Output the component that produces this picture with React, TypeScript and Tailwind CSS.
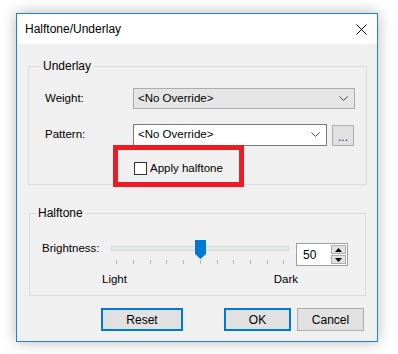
import React from 'react';

const font = { fontFamily: '"Liberation Sans", Arial, sans-serif' };

function Chevron() {
  return (
    <svg width="9" height="6" viewBox="0 0 9 6" className="shrink-0">
      <path d="M0.5 0.5 L4.5 4.5 L8.5 0.5" fill="none" stroke="#444" strokeWidth="1" />
    </svg>
  );
}

function Slider() {
  const ticks = [5, 22, 39, 55, 72, 89, 106, 122, 139, 156, 172];
  return (
    <svg width="178" height="24" viewBox="0 0 178 24" className="shrink-0">
      {/* track */}
      <rect x="0.5" y="6.5" width="177" height="4" fill="#e7eaea" stroke="#d6d6d6" />
      {/* ticks */}
      {ticks.map((x) => (
        <line key={x} x1={x + 0.5} y1="20" x2={x + 0.5} y2="24" stroke="#b4b4b4" />
      ))}
      {/* thumb */}
      <path d="M84 0 H95 V14 L89.5 19 L84 14 Z" fill="#0078d7" />
    </svg>
  );
}

function SpinBox() {
  return (
    <div className="mt-[3px] flex h-[23px] w-[52px] border border-[#a0a0a0] bg-white">
      <div className="flex w-[34px] items-center pl-[6px] text-[12px] text-black">50</div>
      <div className="flex flex-col gap-[1px] py-[1px] pr-[1px]">
        <div className="flex h-[9px] w-[15px] items-center justify-center border border-[#adadad] bg-[#e1e1e1]">
          <svg width="7" height="4" viewBox="0 0 7 4">
            <path d="M0 4 L3.5 0 L7 4 Z" fill="#000" />
          </svg>
        </div>
        <div className="flex h-[9px] w-[15px] items-center justify-center border border-[#adadad] bg-[#e1e1e1]">
          <svg width="7" height="4" viewBox="0 0 7 4">
            <path d="M0 0 L3.5 4 L7 0 Z" fill="#000" />
          </svg>
        </div>
      </div>
    </div>
  );
}

function Button({ label, width, primary }: { label: string; width: string; primary?: boolean }) {
  return (
    <button
      className={`flex h-[23px] items-center justify-center bg-[#e1e1e1] text-[12px] text-black ${width} ${
        primary ? 'border-2 border-[#0078d7]' : 'border border-[#adadad]'
      }`}
    >
      {label}
    </button>
  );
}

export default function App() {
  return (
    <div className="relative h-[354px] w-[398px] overflow-hidden bg-white pl-[16px] pt-[13px]" style={font}>
      <div className="flex h-[329px] w-[362px] flex-col border border-[#1883d7] bg-[#f0f0f0] shadow-[0_0_14px_rgba(0,0,0,0.28)]">
        {/* Title bar */}
        <div className="flex h-[30px] shrink-0 items-center justify-between bg-white pl-[8px] pr-[10px]">
          <span className="text-[12px] text-black">Halftone/Underlay</span>
          <svg width="11" height="11" viewBox="0 0 11 11">
            <path d="M0.5 0.5 L10.5 10.5 M10.5 0.5 L0.5 10.5" stroke="#000" strokeWidth="1" />
          </svg>
        </div>

        {/* Underlay group */}
        <fieldset className="ml-[11px] mt-[14px] w-[339px] border border-[#dcdcdc] p-0">
          <legend className="ml-[11px] px-[3px] text-[12px] leading-[16px] text-black">Underlay</legend>
          <div className="flex flex-col pb-[9px] pl-[16px] pr-[11px] pt-[14px] text-[11.5px]">
            <div className="flex h-[21px] items-center">
              <span className="w-[88px] text-black">Weight:</span>
              <div className="flex h-[21px] flex-1 items-center justify-between border border-[#acacac] bg-[#e5e5e5] pl-[4px] pr-[6px] text-black">
                <span>&lt;No Override&gt;</span>
                <Chevron />
              </div>
            </div>
            <div className="mt-[15px] flex h-[22px] items-center">
              <span className="w-[88px] text-black">Pattern:</span>
              <div className="flex h-[22px] w-[194px] items-center justify-between border border-[#7a7a7a] bg-white pl-[4px] pr-[6px] text-black">
                <span>&lt;No Override&gt;</span>
                <Chevron />
              </div>
              <div className="ml-[5px] flex h-[21px] w-[22px] items-end justify-center border border-[#adadad] bg-[#e1e1e1] pb-[4px] text-[12px] leading-[8px] text-[#1a1a6a]">
                ...
              </div>
            </div>
            <label className="ml-[89px] mt-[16px] flex h-[13px] items-center gap-[3px] text-black">
              <span className="h-[13px] w-[13px] border border-[#333] bg-white" />
              Apply halftone
            </label>
          </div>
        </fieldset>

        {/* Halftone group */}
        <fieldset className="ml-[12px] mt-[20px] w-[337px] border border-[#dcdcdc] p-0">
          <legend className="ml-[6px] px-[2px] text-[12px] leading-[16px] text-black">Halftone</legend>
          <div className="flex flex-col pb-[8px] pl-[12px] pt-[19px] text-[11.5px]">
            <div className="flex items-start">
              <span className="w-[69px] leading-[16px] text-black">Brightness:</span>
              <Slider />
              <div className="ml-[7px]">
                <SpinBox />
              </div>
            </div>
            <div className="mt-[5px] flex w-[256px] justify-between pl-[60px] leading-[16px] text-black">
              <span>Light</span>
              <span>Dark</span>
            </div>
          </div>
        </fieldset>

        {/* Buttons */}
        <div className="mt-[12px] flex pl-[84px]">
          <Button label="Reset" width="w-[82px]" primary />
          <div className="ml-[41px] flex gap-[6px]">
            <Button label="OK" width="w-[67px]" primary />
            <Button label="Cancel" width="w-[67px]" />
          </div>
        </div>
      </div>

      {/* Red annotation box */}
      <div className="absolute left-[113px] top-[145px] h-[42px] w-[131px] border-[5px] border-[#ed1c24]" />
    </div>
  );
}
